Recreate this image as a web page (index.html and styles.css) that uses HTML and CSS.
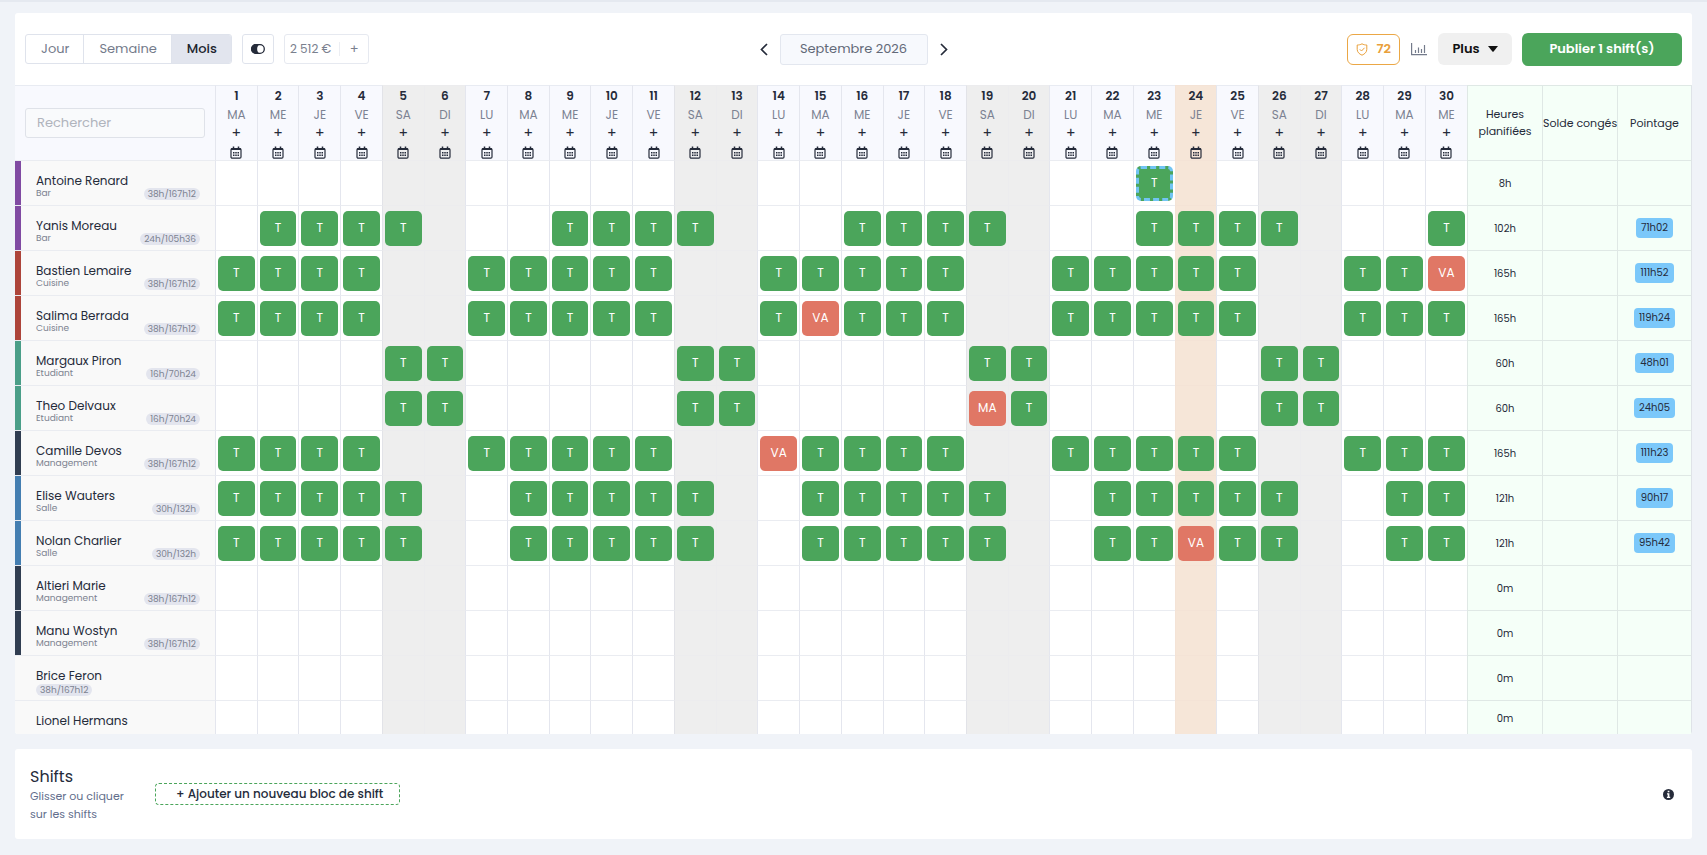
FILE: index.html
```html
<!DOCTYPE html>
<html lang="fr">
<head>
<meta charset="utf-8">
<title>Planning – Septembre 2026</title>
<link rel="stylesheet" href="styles.css">
</head>
<body>
<svg class="sprite" aria-hidden="true">
  <symbol id="i-calendar" viewBox="0 0 12 13">
    <path d="M3.5 .5v2M8.5 .5v2" fill="none" stroke="currentColor" stroke-width="1.5"/>
    <rect x="1" y="2.500" width="10" height="9.600" rx="1.200" fill="none" stroke="currentColor" stroke-width="1.200"/>
    <path d="M1 2.200h10v1.800H1z" fill="currentColor"/>
    <path d="M3 6.800h6.400M3 9.200h6.400" fill="none" stroke="currentColor" stroke-width="1.500" stroke-dasharray="1.500 .75"/>
  </symbol>
</svg>
<main class="page">
  <section class="planner">
    <header class="toolbar">
      <div class="toolbar-left">
        <div class="views">
          <button type="button" class="view">Jour</button>
          <button type="button" class="view">Semaine</button>
          <button type="button" class="view view-active">Mois</button>
        </div>
        <button type="button" class="toggle" aria-label="Affichage">
          <svg width="14" height="10" viewBox="0 0 14 10"><rect x=".7" y=".7" width="12.6" height="8.6" rx="4.3" fill="none" stroke="currentColor" stroke-width="1.3"/><path d="M5 0h4.5a5.4 5.4 0 0 0 0 10H5A5 5 0 0 1 5 0z" fill="currentColor"/></svg>
        </button>
        <div class="budget"><span>2 512 €</span><button type="button" class="budget-add" aria-label="Ajouter">+</button></div>
      </div>
      <div class="period">
        <button type="button" class="arrow" aria-label="Mois précédent"><svg width="8" height="13" viewBox="0 0 8 13"><path d="M7 1 1.5 6.5 7 12" fill="none" stroke="currentColor" stroke-width="1.7"/></svg></button>
        <button type="button" class="month">Septembre 2026</button>
        <button type="button" class="arrow" aria-label="Mois suivant"><svg width="8" height="13" viewBox="0 0 8 13"><path d="m1 1 5.5 5.5L1 12" fill="none" stroke="currentColor" stroke-width="1.7"/></svg></button>
      </div>
      <div class="toolbar-right">
        <button type="button" class="score"><svg width="12" height="13" viewBox="0 0 12 13"><path d="M6 .8C4.600 1.700 2.800 2 1.200 2v4.300c0 2.800 2 4.700 4.800 5.900 2.800-1.200 4.800-3.100 4.800-5.900V2C9.200 2 7.400 1.700 6 .8z" fill="none" stroke="currentColor"/><path d="m3.800 6.300 1.700 1.700 3-3.200" fill="none" stroke="currentColor"/></svg>72</button>
        <button type="button" class="stats" aria-label="Statistiques"><svg width="16" height="13" viewBox="0 0 16 13"><path d="M.6 0v11.700H16M4.500 10V7M7.500 10V4.500M10.500 10V6M13.500 10V2" fill="none" stroke="currentColor" stroke-width="1.200"/></svg></button>
        <button type="button" class="more">Plus <svg width="10" height="6" viewBox="0 0 10 6"><path d="M0 0h10L5.600 5.500q-.6.700-1.200 0z" fill="currentColor"/></svg></button>
        <button type="button" class="publish">Publier 1 shift(s)</button>
      </div>
    </header>
    <div class="grid-view">
      <table class="grid">
        <colgroup id="cols"></colgroup>
        <thead><tr id="head"></tr></thead>
        <tbody id="rows"></tbody>
      </table>
    </div>
  </section>
  <section class="shifts">
    <div class="shifts-intro">
      <h2 class="shifts-title">Shifts</h2>
      <p class="shifts-hint">Glisser ou cliquer sur les shifts</p>
    </div>
    <button type="button" class="add-shift">+ Ajouter un nouveau bloc de shift</button>
    <button type="button" class="info" aria-label="Informations"><svg width="11" height="11" viewBox="0 0 11 11"><circle cx="5.500" cy="5.500" r="5.500" fill="currentColor"/><path d="M4.700 1.700h1.700v1.600H4.700zM4 4.300h2.400v3.500h.8V9H3.900V7.800h.8V5.400H4z" fill="#fff"/></svg></button>
  </section>
</main>
<script src="app.js"></script>
</body>
</html>
```
FILE: styles.css
```css
* { box-sizing: border-box; }
body {
  margin: 0;
  background: #f0f3f8;
  color: #252b3a;
  font: 12px/16px Poppins, Inter, sans-serif;
}
button { font: inherit; color: inherit; background: none; border: 0; padding: 0; margin: 0; cursor: pointer; }
.sprite { display: none; }
.page {
  height: 100vh;
  display: flex;
  flex-direction: column;
  gap: 15px;
  padding: 11px 15px 16px;
  border-top: 2px solid #e5e9f0;
}
.planner { flex: 1; min-height: 0; display: flex; flex-direction: column; background: #fff; border-radius: 3px; overflow: hidden; }
.toolbar {
  display: grid;
  grid-template-columns: 1fr auto 1fr;
  align-items: center;
  height: 72px;
  flex: none;
  padding: 0 10px;
}
.toolbar-left, .toolbar-right, .period { display: flex; align-items: center; }
.toolbar-left { gap: 10px; }
.toolbar-right { justify-content: flex-end; }
.views { display: flex; height: 30px; border: 1px solid #dfe3ec; border-radius: 3px; overflow: hidden; }
.view { padding: 0 14px 0 15px; font-size: 13px; color: #747b8b; }
.view + .view { border-left: 1px solid #dfe3ec; }
.view-active { background: #e2e5ee; color: #20242f; font-weight: 500; }
.toggle { display: flex; align-items: center; justify-content: center; width: 32px; height: 30px; border: 1px solid #dfe3ec; border-radius: 3px; }
.budget { display: flex; align-items: center; height: 30px; padding-left: 5px; border: 1px solid #e6e9f0; border-radius: 3px; color: #7a808e; }
.budget-add { width: 29px; height: 14px; margin-left: 8px; border-left: 1px solid #eceef3; font-size: 13px; line-height: 12px; }
.period { gap: 8px; }
.arrow { display: flex; padding: 4px; }
.month { height: 31px; width: 148px; border: 1px solid #e3e7ef; border-radius: 3px; background: #f7f9fd; font-size: 13px; color: #626978; }
.score { display: flex; align-items: center; gap: 8px; height: 31px; padding: 0 8px; border: 1px solid #eba745; border-radius: 6px; color: #e9a03b; font-size: 13px; font-weight: 600; }
.stats { display: flex; padding: 0 11px; color: #747b8b; }
.more { display: flex; align-items: center; justify-content: center; gap: 8px; width: 74px; height: 32px; margin-right: 10px; border-radius: 6px; background: #f0f0f0; color: #111; font-size: 13px; font-weight: 600; }
.publish { width: 160px; height: 33px; border-radius: 6px; background: #4ba55b; color: #fff; font-size: 13px; font-weight: 600; }

.grid-view { flex: 1; min-height: 0; overflow: hidden; }
.grid { width: 100%; table-layout: fixed; border-collapse: separate; border-spacing: 0; }
.col-name { width: 200px; }
.col-sum { width: 75px; }
.grid th, .grid td { padding: 0; border-left: 1px solid #e4e6ee; border-bottom: 1px solid #eaecf1; font-weight: 400; text-align: center; }
.grid thead th { height: 76px; border-top: 1px solid #e8ebf2; background: #f8f9fe; }
.grid tbody td { height: 45px; }
.grid tbody tr:last-child td { height: 35px; }
.grid .off { background: #eee; border-color: #ececee; }
.grid .off-start { border-left-color: #e2e3e8; }
.grid .today { background: #f6e6d8; border-color: #f4e3d6; }
.grid .sum { background: #f5fff8; border-color: #dfe8e5; font-size: 11px; line-height: 17px; }
.grid tbody .sum { font-size: 10px; }
.grid .sum:last-child { border-right: 1px solid #dfe3e8; }
.grid .corner, .grid tbody .person { border-left: 0; text-align: left; }
.corner .search { display: block; width: calc(100% - 20px); height: 30px; margin: 0 10px; padding: 0 11px; border: 1px solid #dfe2e9; border-radius: 3px; background: #f9fafc; font: 13px/16px Poppins, Inter, sans-serif; color: #252b3a; }
.search::placeholder { color: #b0b4bd; opacity: 1; }
.day { display: flex; flex-direction: column; align-items: center; padding-top: 1px; color: #252b3a; }
.day-num { font-size: 12px; line-height: 18px; font-weight: 600; }
.day-name { line-height: 20px; color: #7c8292; }
.day-add { font-size: 14px; line-height: 16px; }
.day-cal { display: flex; height: 19px; align-items: flex-end; padding-bottom: 1px; }

.person-box { display: flex; height: 44px; border-left: 6px solid transparent; padding: 11px 15px 0; }
.grid tbody .person { background: #f9f9f9; vertical-align: top; }
.grid tbody tr:last-child .person-box { height: 34px; }
.bar { border-left-color: #804aa2; }
.cuisine { border-left-color: #ad443a; }
.etudiant { border-left-color: #4a9e88; }
.management { border-left-color: #303d51; }
.salle { border-left-color: #447eb1; }
.person-text { flex: 1; display: flex; flex-direction: column; align-items: flex-start; }
.person-name { font-size: 12px; line-height: 17px; white-space: nowrap; }
.person-team { font-size: 9px; line-height: 9px; color: #7c8290; }
.quota { align-self: flex-end; margin-bottom: 5px; padding: 0 4px; border-radius: 6px; background: #e3e5ee; color: #7c8290; font-size: 9px; line-height: 12px; white-space: nowrap; }
.person-text .quota { align-self: flex-start; margin: 0; }
.shift { display: block; width: calc(100% - 4px); height: 35px; margin: 0 auto; border-radius: 5px; background: #4ba55b; color: #fff; font-size: 12px; }
.leave { background: #e07765; }
.draft { border: 3px dashed #71c4f3; }
.clock { display: inline-block; padding: 0 5px; border-radius: 4px; background: #7bc8fa; line-height: 20px; }

.shifts { display: flex; align-items: center; flex: none; padding: 16px 18px 16px 15px; background: #fff; border-radius: 3px; }
.shifts-intro { width: 125px; padding-top: 2px; }
.shifts-title { margin: 0; font-size: 16px; line-height: 20px; font-weight: 400; }
.shifts-hint { margin: 0; width: 110px; padding-right: 10px; font-size: 11px; line-height: 18px; color: #616d8b; }
.add-shift { height: 22px; padding: 0 16px 0 20px; border: 1px dashed #4ba55b; border-radius: 4px; font-size: 12px; font-weight: 500; }
.info { display: flex; margin-left: auto; }
```
FILE: app.js
```js
const DAYS = 30;
const TODAY = 24;
const NAMES = ['LU', 'MA', 'ME', 'JE', 'VE', 'SA', 'DI'];
const dayName = d => NAMES[d % 7];
const dayClass = d => d === TODAY ? 'today' : dayName(d) === 'SA' ? 'off off-start' : dayName(d) === 'DI' ? 'off' : '';

const people = [
  { name: 'Antoine Renard', team: 'Bar', quota: '38h/167h12', days: '23', drafts: [23], hours: '8h' },
  { name: 'Yanis Moreau', team: 'Bar', quota: '24h/105h36', days: '2-5 9-12 16-19 23-26 30', hours: '102h', clock: '71h02' },
  { name: 'Bastien Lemaire', team: 'Cuisine', quota: '38h/167h12', days: '1-4 7-11 14-18 21-25 28-30', leave: { 30: 'VA' }, hours: '165h', clock: '111h52' },
  { name: 'Salima Berrada', team: 'Cuisine', quota: '38h/167h12', days: '1-4 7-11 14-18 21-25 28-30', leave: { 15: 'VA' }, hours: '165h', clock: '119h24' },
  { name: 'Margaux Piron', team: 'Etudiant', quota: '16h/70h24', days: '5-6 12-13 19-20 26-27', hours: '60h', clock: '48h01' },
  { name: 'Theo Delvaux', team: 'Etudiant', quota: '16h/70h24', days: '5-6 12-13 19-20 26-27', leave: { 19: 'MA' }, hours: '60h', clock: '24h05' },
  { name: 'Camille Devos', team: 'Management', quota: '38h/167h12', days: '1-4 7-11 14-18 21-25 28-30', leave: { 14: 'VA' }, hours: '165h', clock: '111h23' },
  { name: 'Elise Wauters', team: 'Salle', quota: '30h/132h', days: '1-5 8-12 15-19 22-26 29-30', hours: '121h', clock: '90h17' },
  { name: 'Nolan Charlier', team: 'Salle', quota: '30h/132h', days: '1-5 8-12 15-19 22-26 29-30', leave: { 24: 'VA' }, hours: '121h', clock: '95h42' },
  { name: 'Altieri Marie', team: 'Management', quota: '38h/167h12', days: '', hours: '0m' },
  { name: 'Manu Wostyn', team: 'Management', quota: '38h/167h12', days: '', hours: '0m' },
  { name: 'Brice Feron', quota: '38h/167h12', days: '', hours: '0m' },
  { name: 'Lionel Hermans', days: '', hours: '0m' }
];

const range = Array.from({ length: DAYS }, (_, i) => i + 1);

function expand(text) {
  const out = new Set();
  text.split(' ').filter(Boolean).forEach(part => {
    const [from, to = from] = part.split('-').map(Number);
    for (let d = from; d <= to; d++) out.add(d);
  });
  return out;
}

document.getElementById('cols').innerHTML =
  '<col class="col-name">' + '<col>'.repeat(DAYS) + '<col class="col-sum">'.repeat(3);

document.getElementById('head').innerHTML =
  '<th class="corner"><input class="search" type="text" placeholder="Rechercher" aria-label="Rechercher"></th>' +
  range.map(d => `<th class="${dayClass(d)}"><div class="day"><span class="day-num">${d}</span><span class="day-name">${dayName(d)}</span><button type="button" class="day-add" aria-label="Ajouter le ${d}">+</button><button type="button" class="day-cal" aria-label="Calendrier du ${d}"><svg width="12" height="13"><use href="#i-calendar"/></svg></button></div></th>`).join('') +
  '<th class="sum">Heures planifiées</th><th class="sum">Solde&nbsp;congés</th><th class="sum">Pointage</th>';

document.getElementById('rows').innerHTML = people.map(p => {
  const on = expand(p.days);
  const quota = p.quota ? `<span class="quota">${p.quota}</span>` : '';
  const team = p.team ? `<span class="person-team">${p.team}</span>` : quota;
  const cells = range.map(d => {
    let shift = '';
    if (on.has(d)) {
      const leave = p.leave && p.leave[d];
      const draft = p.drafts && p.drafts.includes(d);
      shift = `<button type="button" class="shift${leave ? ' leave' : ''}${draft ? ' draft' : ''}">${leave || 'T'}</button>`;
    }
    return `<td class="${dayClass(d)}">${shift}</td>`;
  }).join('');
  return `<tr><td class="person"><div class="person-box ${(p.team || '').toLowerCase()}"><div class="person-text"><span class="person-name">${p.name}</span>${team}</div>${p.team ? quota : ''}</div></td>${cells}<td class="sum">${p.hours}</td><td class="sum"></td><td class="sum">${p.clock ? `<span class="clock">${p.clock}</span>` : ''}</td></tr>`;
}).join('');
```
